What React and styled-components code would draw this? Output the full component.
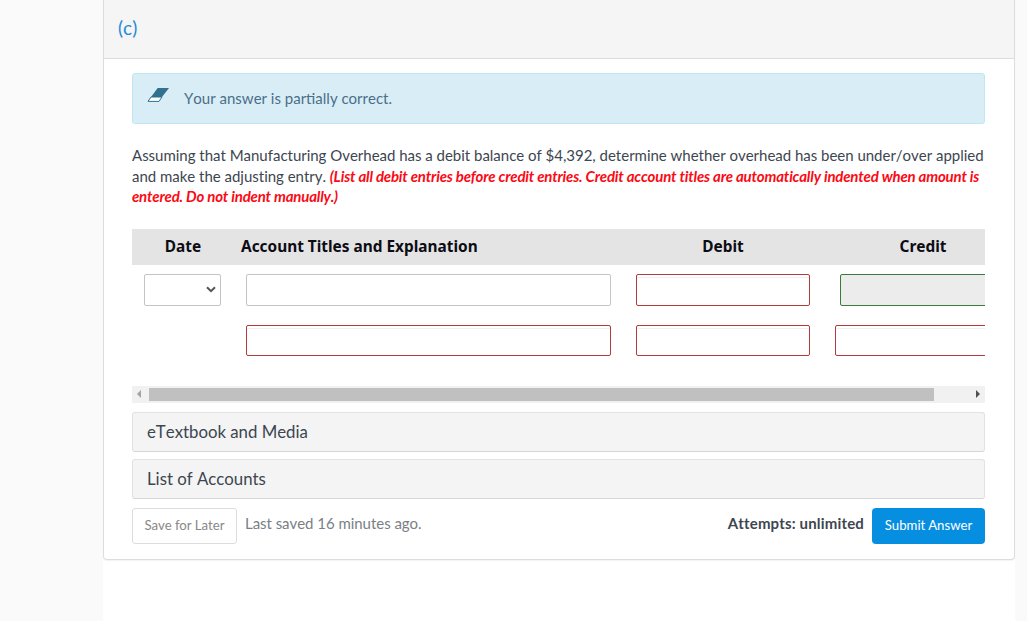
import styled, { createGlobalStyle } from "styled-components";

const GlobalStyle = createGlobalStyle`
    html, body {
        margin: 0;
        height: 100%;
        overflow: hidden;
        background-color: #fafafa;
        font-family: Lato, "Liberation Sans", sans-serif;
        font-kerning: none;
    }
`
const Page = styled.div`
    width: 912px;
    height: 621px;
    margin-left: 103px;
    background-color: #fff;
`
const Panel = styled.div`
    height: 560px;
    box-sizing: border-box;
    border: 1px solid #ddd;
    border-top: 0;
    border-radius: 0 0 4px 4px;
    box-shadow: 0 1px 1px rgba(0, 0, 0, 0.05);
`
const PanelHead = styled.div`
    display: flex;
    align-items: center;
    height: 59px;
    box-sizing: border-box;
    padding: 0 14px 4px;
    background-color: #f5f5f5;
    border-bottom: 1px solid #ddd;
    color: #1f8ad8;
    font-size: 19px;
`
const PanelBody = styled.div`
    padding: 14px 29px 0 28px;
`
const Alert = styled.div`
    display: flex;
    align-items: center;
    gap: 15px;
    height: 51px;
    box-sizing: border-box;
    padding: 0 14px 2px;
    background-color: #d9edf7;
    border: 1px solid #bce8f1;
    border-radius: 3px;
    color: #4a6f88;
    font-size: 15px;
`
const AlertIcon = styled.svg`
    margin-bottom: 6px;
`
const Question = styled.p`
    margin: 21px 0 22px;
    color: #3d4650;
    font-size: 15px;
    line-height: 20.6px;
    letter-spacing: -0.016px;
    white-space: nowrap;
`
const Note = styled.em`
    color: #fa0a14;
    font-weight: 700;
    letter-spacing: -0.19px;
`
const TableScroll = styled.div`
    overflow: hidden;
`
const Grid = styled.div`
    display: grid;
    grid-template-columns: 102px 389px 200px 200px;
    width: 891px;
`
const HeadCell = styled.div`
    display: flex;
    align-items: center;
    justify-content: ${(p) => (p.$left ? "flex-start" : "center")};
    height: 36px;
    box-sizing: border-box;
    padding-left: ${(p) => (p.$left ? "7px" : "0")};
    background-color: #e4e4e4;
    color: #0c0c14;
    font-family: "Noto Sans", sans-serif;
    font-size: 15.4px;
    font-weight: 700;
`
const Cell = styled.div`
    display: flex;
    align-items: center;
    height: ${(p) => p.$h}px;
    box-sizing: border-box;
    padding-left: ${(p) => p.$pad}px;
`
const Field = styled.input`
    width: ${(p) => p.$w}px;
    height: ${(p) => p.$fh || 32}px;
    box-sizing: border-box;
    padding: 0;
    background-color: ${(p) => (p.$tone === "ok" ? "#ececec" : "#fff")};
    border: 1px solid ${(p) =>
        p.$tone === "bad" ? "#b23b3b" : p.$tone === "ok" ? "#3a7a3a" : "#c4c4c4"};
    border-radius: 2px;
    outline: 0;
    box-shadow: ${(p) => (p.$tone === "bad" ? "inset 0 2px 0 #fff, inset 0 3px 0 #f0f0f0" : "none")};
`
const DateSelect = styled.div`
    display: flex;
    align-items: center;
    justify-content: flex-end;
    width: 77px;
    height: 32px;
    box-sizing: border-box;
    padding-right: 4px;
    background-color: #fff;
    border: 1px solid #c4c4c4;
    border-radius: 2px;
`
const ScrollTrack = styled.div`
    display: flex;
    align-items: center;
    justify-content: space-between;
    height: 17px;
    margin-top: 20px;
    padding: 0 5px;
    background-color: #f1f1f1;
`
const Thumb = styled.div`
    width: 785px;
    height: 13px;
    margin-left: 1px;
    margin-right: 36px;
    background-color: #c0c0c0;
`
const Arrow = styled.span`
    width: 0;
    height: 0;
    border-top: 4px solid transparent;
    border-bottom: 4px solid transparent;
    ${(p) => (p.$right ? "border-left: 4px solid #505050;" : "border-right: 4px solid #a3a3a3;")}
`
const Accordion = styled.div`
    display: flex;
    align-items: center;
    height: 40px;
    box-sizing: border-box;
    margin-top: ${(p) => p.$top}px;
    padding: 0 0 1px 14px;
    background-color: #f4f4f4;
    border: 1px solid #e2e2e2;
    border-bottom-color: #d6d6d6;
    border-radius: 3px;
    color: #3c4650;
    font-size: 16.8px;
`
const Footer = styled.div`
    display: flex;
    align-items: center;
    gap: 8px;
    margin-top: 9px;
`
const SaveButton = styled.button`
    width: 105px;
    height: 36px;
    padding: 0 0 1px;
    background-color: #fff;
    border: 1px solid #ddd;
    border-radius: 3px;
    color: #888;
    font-family: inherit;
    font-size: 13.2px;
`
const Saved = styled.span`
    flex: 1;
    margin-bottom: 5px;
    color: #7a7f85;
    font-size: 15px;
    letter-spacing: -0.04px;
`
const Attempts = styled.span`
    margin-bottom: 5px;
    color: #3d4650;
    font-size: 15px;
    font-weight: 700;
    letter-spacing: 0.16px;
`
const SubmitButton = styled.button`
    width: 113px;
    height: 36px;
    padding: 0 0 1px;
    background-color: #068ee0;
    border: 0;
    border-radius: 4px;
    color: #fff;
    font-family: inherit;
    font-size: 13.2px;
`

const EraserIcon = () => (
    <AlertIcon width="22" height="14" viewBox="0 0 22 14">
        <path d="M10.7 0H22L15 9H4Z" fill="#31708f" />
        <path d="M4 9H15L12 13.4H1Z" fill="#fff" stroke="#31708f" strokeWidth="1" />
    </AlertIcon>
)

const Chevron = () => (
    <svg width="10" height="7" viewBox="0 0 10 7">
        <path d="M1 1.2L5 5.2L9 1.2" fill="none" stroke="#555" strokeWidth="2" />
    </svg>
)

const App = () => {
    return (
        <>
            <GlobalStyle />
            <Page>
                <Panel>
                    <PanelHead>(c)</PanelHead>
                    <PanelBody>
                        <Alert>
                            <EraserIcon />
                            Your answer is partially correct.
                        </Alert>
                        <Question>
                            Assuming that Manufacturing Overhead has a debit balance of $4,392, determine whether overhead has been under/over applied
                            <br />
                            and make the adjusting entry.{" "}
                            <Note>
                                (List all debit entries before credit entries. Credit account titles are automatically indented when amount is
                                <br />
                                entered. Do not indent manually.)
                            </Note>
                        </Question>
                        <TableScroll>
                            <Grid>
                                <HeadCell>Date</HeadCell>
                                <HeadCell $left>Account Titles and Explanation</HeadCell>
                                <HeadCell>Debit</HeadCell>
                                <HeadCell>Credit</HeadCell>

                                <Cell $h={50} $pad={12}>
                                    <DateSelect>
                                        <Chevron />
                                    </DateSelect>
                                </Cell>
                                <Cell $h={50} $pad={12}>
                                    <Field $w={365} />
                                </Cell>
                                <Cell $h={50} $pad={13}>
                                    <Field $w={174} $tone="bad" />
                                </Cell>
                                <Cell $h={50} $pad={17}>
                                    <Field $w={175} $tone="ok" />
                                </Cell>

                                <Cell $h={51} $pad={12} />
                                <Cell $h={51} $pad={12}>
                                    <Field $w={365} $fh={31} $tone="bad" />
                                </Cell>
                                <Cell $h={51} $pad={13}>
                                    <Field $w={174} $fh={31} $tone="bad" />
                                </Cell>
                                <Cell $h={51} $pad={12}>
                                    <Field $w={175} $fh={31} $tone="bad" />
                                </Cell>
                            </Grid>
                        </TableScroll>
                        <ScrollTrack>
                            <Arrow />
                            <Thumb />
                            <Arrow $right />
                        </ScrollTrack>
                        <Accordion $top={9}>eTextbook and Media</Accordion>
                        <Accordion $top={7}>List of Accounts</Accordion>
                        <Footer>
                            <SaveButton>Save for Later</SaveButton>
                            <Saved>Last saved 16 minutes ago.</Saved>
                            <Attempts>Attempts: unlimited</Attempts>
                            <SubmitButton>Submit Answer</SubmitButton>
                        </Footer>
                    </PanelBody>
                </Panel>
            </Page>
        </>
    )
}

export default App;
